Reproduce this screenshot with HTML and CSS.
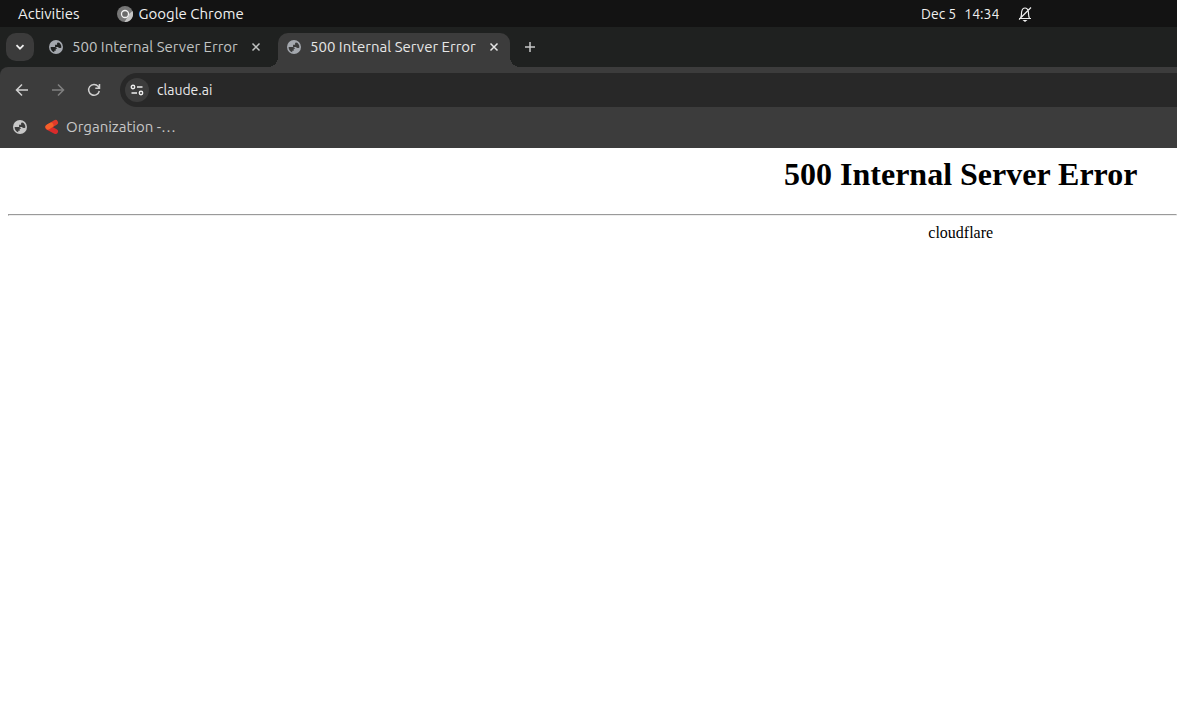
FILE: index.html
```html
<!DOCTYPE html>
<html lang="en">
<head>
    <meta charset="utf-8">
    <title>500 Internal Server Error</title>
    <link rel="stylesheet" href="styles.css">
</head>
<body>
    <svg class="sprite" aria-hidden="true">
        <symbol id="globe" viewBox="0 0 24 24">
            <path fill="currentColor" fill-rule="evenodd" d="M12 0a12 12 0 1 0 0 24a12 12 0 0 0 0-24zM2.800 12h6.200c2.500 0 4.200 1 5 3.200h-2.500v3.300h-2.500v2.400c-4-1.300-6.400-4.700-6.200-8.900zM21.200 12.800c-2.300 1.500-4.800 1.200-5.800-.8h-5v-3.800h3.500v-3.400h2.500v-1c3.200 1.800 5 5 4.800 9z"/>
        </symbol>
        <symbol id="close" viewBox="0 0 10 10">
            <path d="M1.500 1.500l7 7M8.500 1.500l-7 7" fill="none" stroke="currentColor" stroke-width="1.500"/>
        </symbol>
    </svg>

    <header class="topbar">
        <div class="topbar-left">
            <button type="button">Activities</button>
            <button type="button" class="app">
                <svg width="16" height="16" viewBox="0 0 16 16" aria-hidden="true">
                    <circle cx="8" cy="8" r="8" fill="#777"/>
                    <path d="M12 8l3.500-3a8 8 0 0 1-8 11l3-5z" fill="#c4c4c4"/>
                    <circle cx="8" cy="8" r="3.500" fill="#6a6a6a" stroke="#f4f4f4" stroke-width="1.300"/>
                </svg>
                Google Chrome
            </button>
        </div>
        <button type="button" class="clock"><span>Dec 5</span><span>14:34</span></button>
        <svg class="bell" width="14" height="16" viewBox="0 0 14 16" fill="none" stroke="#eee" stroke-width="1.200" role="img" aria-label="Notifications off">
            <path d="M1 12.500h12M2.500 12c1.300-1.500.7-4 1.200-6.500c.5-2.500 1.700-3.500 3.300-3.500s2.800 1 3.300 3.500c.5 2.500-.1 5 1.200 6.500M13 1.500l-12 12"/>
            <path d="M4.500 14h5l-2.500 2z" fill="#eee" stroke="none"/>
        </svg>
    </header>

    <div class="tabstrip">
        <button type="button" class="tab-search" aria-label="Search tabs">
            <svg width="10" height="10" viewBox="0 0 10 10" aria-hidden="true"><path d="M1.500 3.200l3.500 3.500l3.500-3.500" fill="none" stroke="#eee" stroke-width="1.800"/></svg>
        </button>
        <div class="tab">
            <svg class="globe" aria-hidden="true"><use href="#globe"/></svg>
            <span class="tab-title">500 Internal Server Error</span>
            <button type="button" class="tab-close" aria-label="Close tab"><svg width="10" height="10"><use href="#close"/></svg></button>
        </div>
        <div class="tab active">
            <svg class="globe" aria-hidden="true"><use href="#globe"/></svg>
            <span class="tab-title">500 Internal Server Error</span>
            <button type="button" class="tab-close" aria-label="Close tab"><svg width="10" height="10"><use href="#close"/></svg></button>
        </div>
        <button type="button" class="new-tab" aria-label="New tab">
            <svg width="12" height="12" viewBox="0 0 12 12" aria-hidden="true"><path d="M6 1v10M1 6h10" stroke="#c7c7c7" stroke-width="1.500"/></svg>
        </button>
    </div>

    <div class="chrome">
        <div class="toolbar">
            <button type="button" class="nav" aria-label="Back">
                <svg width="14" height="14" viewBox="0 0 14 14"><path d="M13 7h-11M7 1.500l-5.500 5.500l5.500 5.500"/></svg>
            </button>
            <button type="button" class="nav" aria-label="Forward" disabled>
                <svg width="14" height="14" viewBox="0 0 14 14"><path d="M1 7h11M7 1.500l5.500 5.500l-5.500 5.500"/></svg>
            </button>
            <button type="button" class="nav" aria-label="Reload">
                <svg width="14" height="14" viewBox="0 0 14 14"><path d="M12.300 8a5.400 5.400 0 1 1-1.200-4.700l1.200 1.500M12.500 1v4.200h-4.200"/></svg>
            </button>
            <div class="omnibox">
                <button type="button" class="site-info" aria-label="View site information">
                    <svg width="14" height="12" viewBox="0 0 14 12" fill="none" stroke="#eee" stroke-width="1.400" aria-hidden="true">
                        <circle cx="3" cy="3" r="1.700"/><path d="M7 3h5.500M1.500 9h5.500"/><circle cx="11" cy="9" r="1.700"/>
                    </svg>
                </button>
                <input type="text" class="url" aria-label="Address" value="claude.ai">
            </div>
        </div>
        <nav class="bookmarks">
            <a href="#" aria-label="Bookmark"><svg class="globe" aria-hidden="true"><use href="#globe"/></svg></a>
            <a href="#">
                <svg width="16" height="16" viewBox="0 0 16 16" fill="none" stroke-width="5" stroke-linecap="round" aria-hidden="true">
                    <path d="M4 8.500l7.500 4" stroke="#d92b2b"/>
                    <path d="M4 8l7.500-4.500" stroke="#e03a2a"/>
                    <path d="M4 8l3-1.800" stroke="#f4602a"/>
                </svg>
                Organization -…
            </a>
        </nav>
    </div>

    <main class="page">
        <h1>500 Internal Server Error</h1>
        <hr>
        <div class="server">cloudflare</div>
    </main>
</body>
</html>
```
FILE: styles.css
```css
body {
    margin: 0;
    background: #fff;
    font-family: Ubuntu, "Noto Sans", sans-serif;
    font-size: 15px;
    line-height: 18px;
}
button {
    padding: 0;
    border: none;
    background: none;
    color: inherit;
    font: inherit;
}
svg {
    flex: none;
}
.sprite {
    display: none;
}
.globe {
    width: 14px;
    height: 14px;
}

.topbar {
    display: grid;
    grid-template-columns: 78% auto 1fr;
    align-items: center;
    height: 27px;
    background: #131313;
    color: #f0f0f0;
}
.topbar-left {
    display: flex;
    gap: 37px;
    padding-left: 18px;
}
.app {
    display: flex;
    align-items: center;
    gap: 6px;
}
.clock {
    display: flex;
    gap: 8px;
    padding-left: 3px;
    font-size: 14px;
}
.bell {
    margin-left: 19px;
}

.tabstrip {
    display: flex;
    align-items: flex-start;
    height: 34px;
    padding: 6px 6px 0;
    background: #1f2120;
}
.tab-search {
    display: flex;
    align-items: center;
    justify-content: center;
    width: 28px;
    height: 28px;
    margin-right: 6px;
    border-radius: 10px;
    background: #3b3b3b;
}
.tab {
    position: relative;
    display: flex;
    align-items: center;
    box-sizing: border-box;
    width: 232px;
    height: 34px;
    margin-right: 6px;
    padding: 0 11px 6px 9px;
    color: #c0c3c2;
}
.tab .globe {
    margin-right: 9px;
    color: #a4a8ae;
}
.tab-title {
    flex: 1;
    white-space: nowrap;
}
.tab-close {
    display: flex;
}
.tab.active {
    border-radius: 10px 10px 0 0;
    background: #3c3c3c;
    color: #e6e6e6;
}
.tab.active::before,
.tab.active::after {
    content: "";
    position: absolute;
    bottom: 0;
    width: 10px;
    height: 10px;
}
.tab.active::before {
    right: 100%;
    background: radial-gradient(circle at 0 0, transparent 10px, #3c3c3c 10px);
}
.tab.active::after {
    left: 100%;
    background: radial-gradient(circle at 100% 0, transparent 10px, #3c3c3c 10px);
}
.new-tab {
    display: flex;
    align-items: center;
    justify-content: center;
    width: 28px;
    height: 28px;
}

.chrome {
    height: 75px;
    padding-top: 6px;
    border-radius: 8px 0 0 0;
    background: #3c3c3c;
    box-shadow: 0 0 0 8px #1f2120;
    clip-path: inset(0);
}
.toolbar {
    display: flex;
    align-items: center;
    gap: 8px;
    padding-left: 8px;
}
.nav {
    display: flex;
    align-items: center;
    justify-content: center;
    width: 28px;
    height: 28px;
}
.nav svg {
    fill: none;
    stroke: #d0d0d0;
    stroke-width: 1.5;
}
.nav:disabled svg {
    stroke: #808080;
}
.omnibox {
    display: flex;
    flex: 1;
    align-items: center;
    gap: 8px;
    height: 34px;
    margin-left: 4px;
    padding-left: 5px;
    border-radius: 17px 0 0 17px;
    background: #282828;
}
.site-info {
    display: flex;
    align-items: center;
    justify-content: center;
    width: 24px;
    height: 24px;
    border-radius: 12px;
    background: #3c3c3c;
}
.url {
    flex: 1;
    padding: 0;
    border: none;
    outline: none;
    background: none;
    color: #e8e8e8;
    font: inherit;
    font-size: 14px;
}
.bookmarks {
    display: flex;
    align-items: center;
    gap: 17px;
    height: 40px;
    padding-left: 13px;
}
.bookmarks a {
    display: flex;
    align-items: center;
    gap: 6px;
    color: #c7c7c7;
    text-decoration: none;
}

.page {
    padding: 8px 0 8px 8px;
    color: #000;
    font-family: "Liberation Serif", "Times New Roman", serif;
    font-size: 16px;
    line-height: normal;
    text-align: center;
}
.page h1,
.server {
    padding-left: 63%;
}
.page h1 {
    margin: 0 0 21px;
    font-size: 32px;
}
```
